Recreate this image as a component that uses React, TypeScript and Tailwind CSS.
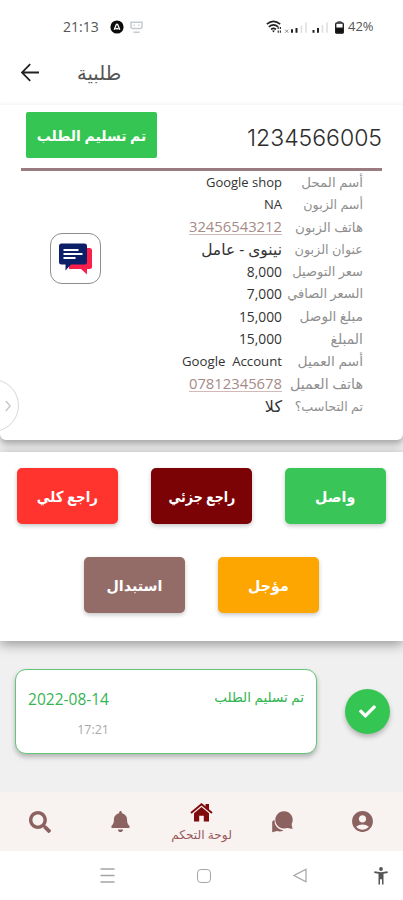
import { FaBell, FaCheck, FaSearch } from "react-icons/fa";
import { MdAccountCircle } from "react-icons/md";

type Detail = {
  label: string;
  value: string;
  link?: boolean;
  labelClass: string;
  valueClass: string;
};

const details: Detail[] = [
  { label: "أسم المحل", value: "Google shop", labelClass: "text-[13.4px]", valueClass: "text-[13px]" },
  { label: "أسم الزبون", value: "NA", labelClass: "text-[12.7px]", valueClass: "text-[13px]" },
  { label: "هاتف الزبون", value: "32456543212", link: true, labelClass: "text-[13.4px]", valueClass: "text-[14.8px]" },
  { label: "عنوان الزبون", value: "نينوى - عامل", labelClass: "text-[12.8px]", valueClass: "text-[15.5px]" },
  { label: "سعر التوصيل", value: "8,000", labelClass: "text-[13px]", valueClass: "text-[13.8px]" },
  { label: "السعر الصافي", value: "7,000", labelClass: "text-[13px]", valueClass: "text-[13.8px]" },
  { label: "مبلغ الوصل", value: "15,000", labelClass: "text-[13.6px]", valueClass: "text-[13.8px]" },
  { label: "المبلغ", value: "15,000", labelClass: "text-[14px]", valueClass: "text-[13.8px]" },
  { label: "أسم العميل", value: "Google  Account", labelClass: "text-[13.8px]", valueClass: "text-[13.2px]" },
  { label: "هاتف العميل", value: "07812345678", link: true, labelClass: "text-[14.3px]", valueClass: "text-[14.8px]" },
  { label: "تم التحاسب؟", value: "كلا", labelClass: "text-[12.7px]", valueClass: "text-[16px]" },
];

function StatusBar() {
  return (
    <div dir="ltr" className="flex h-[54px] items-center bg-white pr-[28px] pl-[63px] text-[#555]">
      <span className="mb-px w-[37px] text-[14px] whitespace-nowrap">21:13</span>
      <svg className="mb-px ml-[10px]" width="14" height="14" viewBox="0 0 14 14">
        <circle cx="7" cy="7" r="6.6" fill="#0c0c0c" />
        <path d="M4.2 9.8 6.2 4.8Q7 3.500 7.800 4.800L9.800 9.800M5.700 9.400Q7 7.200 8.300 9.400" fill="none" stroke="#fff" strokeWidth="1.300" />
      </svg>
      <svg className="ml-[6px]" width="13" height="13" viewBox="0 0 13 13" fill="none" stroke="#c3cbcf" strokeWidth="1.5">
        <path d="M1 1.200h11v4.300q0 2-2 2H3q-2 0-2-2zM3.500 4.200h1.200M8.300 4.200h1.200M3.500 11.200h6" />
      </svg>
      <span className="flex-1" />
      <svg className="mb-px" width="79" height="16" viewBox="0 0 79 16">
        <g fill="none" stroke="#222" strokeWidth="1.600">
          <path d="M.800 5.200Q7.500-.500 14.200 5.200M2.800 7.900Q7.500 4 12.200 7.900M5 10.300Q7.500 8.400 10 10.300" />
        </g>
        <path d="M6 11.600h3l-1.500 2z" fill="#222" />
        <path d="M12.200 8v2M14.400 8v2M12.200 11.500v2.200M14.400 11.500v2.200" stroke="#333" strokeWidth="1.200" />
        <path d="m19.200 10.700 3 3m0-3-3 3" stroke="#888" strokeWidth="1" />
        <path d="M26 10.300v3.500M30.500 9v4.800M47.500 11v2.800M52 9v4.800" stroke="#222" strokeWidth="2" />
        <path d="M35.500 6.500v7.300M40 3.500v10.300M56.500 6v7.800M61 3.500v10.300" stroke="#ddd" strokeWidth="1.500" />
        <rect x="69.700" y="4" width="7.600" height="10" rx="1.200" fill="#fff" stroke="#222" strokeWidth="1.400" />
        <path d="M71.500 2.900h4M69.700 9h7.600v5h-7.600z" fill="#111" stroke="#222" />
      </svg>
      <span className="ml-[3px] w-[27px] text-[13px] whitespace-nowrap">42%</span>
    </div>
  );
}

function Header() {
  return (
    <header dir="ltr" className="flex h-[50px] items-center bg-white pb-[13px] pl-[21px]">
      <svg width="19" height="19" viewBox="0 0 19 19" fill="none" stroke="#222" strokeWidth="1.800">
        <path d="M9.200 1.200.900 9.500l8.300 8.300M1 9.500h17" />
      </svg>
      <h1 className="ml-[37px] text-[19.500px] leading-none text-[#555]">طلبية</h1>
    </header>
  );
}

function DetailRow({ row }: { row: Detail }) {
  return (
    <div className="flex h-[22.4px] items-center pr-[40px] whitespace-pre">
      <span className={`w-[81px] text-[#8f8f8f] ${row.labelClass}`}>{row.label}</span>
      <span
        dir="auto"
        className={`leading-none ${row.valueClass} ${
          row.link ? "border-b border-[#d3b9b7] text-[#a58a88]" : "text-[#333]"
        }`}
      >
        {row.value}
      </span>
    </div>
  );
}

function OrderCard() {
  return (
    <section className="relative z-10 h-[336px] rounded-b-md border-t border-[#f7f7f7] bg-white shadow-[0_4px_6px_rgba(0,0,0,0.3)]">
      <div className="mx-[21px] flex h-[66px] items-center justify-between border-b-3 border-[#9a7c80]">
        <span className="mt-[3px] font-[Inter] text-[23px] font-light text-[#2d2d2d]">1234566005</span>
        <button className="mr-auto mb-[3px] ml-[5px] h-[46px] w-[131px] rounded-[2px] bg-[#35c553] text-[14px] font-bold whitespace-nowrap text-white">
          تم تسليم الطلب
        </button>
      </div>
      {details.map((row) => (
        <DetailRow key={row.label} row={row} />
      ))}

      <button className="absolute top-[128px] left-[50px] flex size-[51px] items-center justify-center rounded-[12px] border border-[#8d8d8d] bg-white">
        <svg width="34" height="32" viewBox="0 0 34 32">
          <path d="M10 5h20.500q2.500 0 2.500 2.500v16q0 2.500-2.500 2.500H28v5.500L22 26H10z" fill="#fb1f4b" />
          <path d="M2.500.500h23q2.500 0 2.500 2.500v16q0 2.500-2.500 2.500H12l-5.500 6v-6h-4Q0 21.500 0 19V3Q0 .500 2.500.500" fill="#0d1f66" />
          <path d="M4.500 7h15M4.500 11h19M4.500 15h12" stroke="#fff" strokeWidth="2" />
        </svg>
      </button>

      {/* side drawer handle */}
      <div
        dir="ltr"
        className="absolute top-[274px] left-[-34px] flex size-[53px] items-center justify-end rounded-full border border-[#d6d6d6] bg-white pr-[7px]"
      >
        <svg width="6" height="12" viewBox="0 0 6 12" fill="none" stroke="#c4c4c4" strokeWidth="1.300">
          <path d="m.800 1 4.400 5-4.400 5" />
        </svg>
      </div>
    </section>
  );
}

const buttonClass =
  "h-[56px] w-[101px] rounded-[5px] text-[15px] font-bold text-white whitespace-nowrap shadow-[0_2px_4px_rgba(0,0,0,0.22)]";

function Actions() {
  return (
    <section className="relative mt-[12px] h-[189px] bg-white pt-[16px] shadow-[0_3px_12px_rgba(0,0,0,0.4)]">
      <div className="flex justify-center gap-[33px]">
        <button className={`${buttonClass} bg-[#39c558]`}>
          <span className="inline-block scale-x-95">واصل</span>
        </button>
        <button className={`${buttonClass} bg-[#7b0305]`}>
          <span className="-mx-2 inline-block scale-x-[0.84]">راجع جزئي</span>
        </button>
        <button className={`${buttonClass} bg-[#ff342f]`}>
          <span className="inline-block scale-x-[0.89]">راجع كلي</span>
        </button>
      </div>
      <div className="mt-[33px] flex justify-center gap-[33px]">
        <button className={`${buttonClass} bg-[#fda501]`}>
          <span className="inline-block scale-x-95">مؤجل</span>
        </button>
        <button className={`${buttonClass} bg-[#936c67]`}>
          <span className="inline-block scale-x-95">استبدال</span>
        </button>
      </div>
    </section>
  );
}

function Timeline() {
  return (
    <section className="flex h-[151px] items-start pt-[28px] pr-[13px]">
      <div className="mt-[20px] flex size-[45px] items-center justify-center rounded-full bg-[#35c553] text-white shadow-[0_3px_5px_rgba(0,0,0,0.25)]">
        <FaCheck size={17} />
      </div>
      <div className="mr-[28px] flex h-[85px] w-[302px] justify-between rounded-[11px] border border-[#62c67a] bg-white pt-[17px] pr-[12px] pl-[12px] shadow-[0_3px_5px_rgba(0,0,0,0.25)]">
        <span className="text-[13.500px] text-[#35b551]">تم تسليم الطلب</span>
        <div dir="ltr" className="flex w-[81px] flex-col items-end whitespace-nowrap">
          <span className="text-[15.500px] leading-[24px] text-[#35b551]">2022-08-14</span>
          <span className="mt-[9px] text-[12.500px] leading-[20px] text-[#a9a9a9]">17:21</span>
        </div>
      </div>
    </section>
  );
}

function HomeIcon() {
  return (
    <svg width="23" height="19" viewBox="0 0 23 19">
      <path d="M15.500 1h3.500v6l-3.500-3z" fill="#800b0d" />
      <path d="M1 10 11.500 1.200 22 10" fill="none" stroke="#800b0d" strokeWidth="1.900" />
      <path d="M4 10.200 11.500 4 19 10.200V18.500h-5.200v-5.700H9.200v5.700H4z" fill="#800b0d" />
    </svg>
  );
}

function ChatIcon() {
  return (
    <svg width="23" height="23" viewBox="0 0 23 23" fill="#8c6261" className="mx-auto">
      <path d="M1.200 11.500 3.400 9.800A10 10 0 0 0 12.500 20.400Q9.500 22.200 6 21L1.200 22.200z" />
      <path d="M13 1.200a8.700 8.700 0 1 1-.01 0zM20.500 13.500l1 5.600-6-1.300z" />
    </svg>
  );
}

function TabBar() {
  return (
    <nav dir="ltr" className="grid h-[59px] grid-cols-5 items-center bg-[#f8f3f1] text-[#8c6261]">
      <FaSearch size={22} className="mx-auto" />
      <FaBell size={21} className="mx-auto" />
      <div className="flex flex-col items-center pt-[2px] text-[#800b0d]">
        <HomeIcon />
        <span className="mt-[5px] text-[12.200px] leading-[16px] whitespace-nowrap text-[#98595b]">لوحة التحكم</span>
      </div>
      <ChatIcon />
      <MdAccountCircle size={25} className="mx-auto" />
    </nav>
  );
}

function SystemNav() {
  return (
    <div dir="ltr" className="flex h-[49px] items-center bg-white pl-[100px]">
      <svg width="15" height="15" viewBox="0 0 15 15" stroke="#a5a5a5" strokeWidth="1.300">
        <path d="M.500 1h14M.500 7.500h14M.500 14h14" />
      </svg>
      <div className="ml-[82px] size-[14px] rounded-[4px] border border-[#a5a5a5]" />
      <svg className="ml-[82px]" width="14" height="15" viewBox="0 0 14 15" fill="none" stroke="#a5a5a5" strokeWidth="1.200">
        <path d="M13 1.200v12.600L1 7.500z" />
      </svg>
      <svg className="ml-[67px]" width="14" height="18" viewBox="0 0 14 18" fill="#555">
        <circle cx="7" cy="2" r="1.900" />
        <path d="M.500 4.300 7 5.200l6.500-.900.300 1.600-4.300.900V17.500H8v-5.200H6v5.200H4.500V6.800L.200 5.900z" />
      </svg>
    </div>
  );
}

export default function App() {
  return (
    <div
      dir="rtl"
      className="h-[900px] w-[403px] overflow-hidden bg-[#f0f0f0] font-['Open_Sans','DejaVu_Sans',sans-serif]"
    >
      <StatusBar />
      <Header />
      <OrderCard />
      <Actions />
      <Timeline />
      <TabBar />
      <SystemNav />
    </div>
  );
}
